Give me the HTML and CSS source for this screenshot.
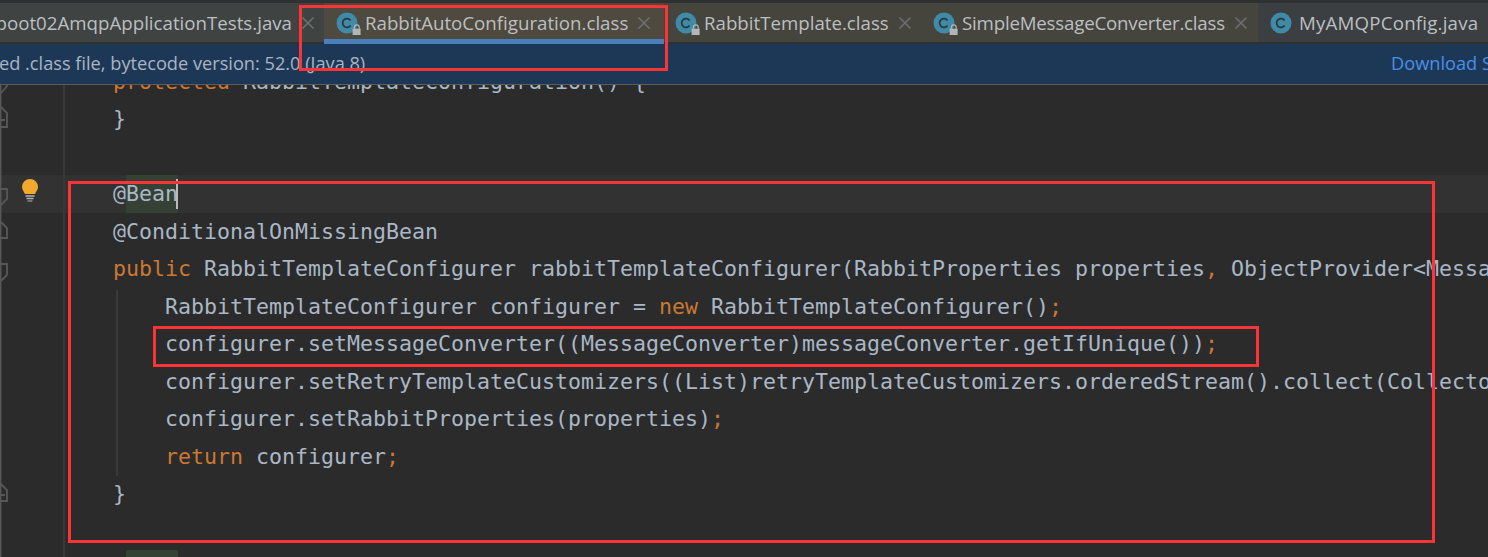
FILE: index.html
```html
<!DOCTYPE html>
<html lang="en">
<head>
<meta charset="utf-8">
<title>RabbitAutoConfiguration.class</title>
<link rel="stylesheet" href="styles.css">
</head>
<body>
<svg class="defs" width="0" height="0" aria-hidden="true">
  <symbol id="cls" viewBox="0 0 26 24">
    <circle cx="11" cy="12" r="10.5" fill="#3f8aa6"/>
    <path d="M14.6 9.400A4.400 4.400 0 1 0 14.600 14.600" fill="none" stroke="#29363c" stroke-width="1.7"/>
  </symbol>
  <symbol id="lock" viewBox="0 0 26 24">
    <path d="M18.400 17.800v-1.600a2.400 2.400 0 0 1 4.800 0v1.600" fill="none" stroke="#b3b6b8" stroke-width="1.200"/>
    <rect x="16.600" y="17.600" width="8" height="6.400" fill="#b3b6b8"/>
  </symbol>
  <symbol id="close" viewBox="0 0 14 14">
    <path d="M1.500 1.500L12.500 12.500M12.500 1.500L1.500 12.500" stroke="#6e7172" stroke-width="1.500" fill="none"/>
  </symbol>
</svg>
<div class="app">
  <div class="tabs">
    <div class="tab tab-first">
      <span class="tab-label">boot02AmqpApplicationTests.java</span>
      <svg class="tab-close"><use href="#close"/></svg>
    </div>
    <div class="tab tab-active">
      <svg class="tab-icon"><use href="#cls"/><use href="#lock"/></svg>
      <span class="tab-label">RabbitAutoConfiguration.class</span>
      <svg class="tab-close"><use href="#close"/></svg>
    </div>
    <div class="tab tab-third">
      <svg class="tab-icon"><use href="#cls"/><use href="#lock"/></svg>
      <span class="tab-label">RabbitTemplate.class</span>
      <svg class="tab-close"><use href="#close"/></svg>
    </div>
    <div class="tab tab-fourth">
      <svg class="tab-icon"><use href="#cls"/><use href="#lock"/></svg>
      <span class="tab-label">SimpleMessageConverter.class</span>
      <svg class="tab-close"><use href="#close"/></svg>
    </div>
    <div class="tab tab-last">
      <svg class="tab-icon"><use href="#cls"/></svg>
      <span class="tab-label">MyAMQPConfig.java</span>
    </div>
  </div>
  <div class="banner">
    <span class="banner-text">ed .class file, bytecode version: 52.0 (Java 8)</span>
    <span class="banner-link">Download Sources</span>
  </div>
  <div class="editor">
    <div class="code">
      <div class="line"><span class="kw">protected</span> RabbitTemplateConfiguration() {</div>
      <div class="line">}</div>
      <div class="line"></div>
      <div class="line line-current">@<span class="match">Bean</span><span class="caret"></span></div>
      <div class="line">@ConditionalOnMissingBean</div>
      <div class="line"><span class="kw">public</span> RabbitTemplateConfigurer rabbitTemplateConfigurer(RabbitProperties properties<span class="kw">,</span> ObjectProvider&lt;MessageConverter&gt; messageConverter<span class="kw">,</span> ObjectProvider&lt;RabbitRetryTemplateCustomizer&gt; retryTemplateCustomizers) {</div>
      <div class="line indent">RabbitTemplateConfigurer configurer = <span class="kw">new</span> RabbitTemplateConfigurer()<span class="kw">;</span></div>
      <div class="line indent">configurer.setMessageConverter((MessageConverter)messageConverter.getIfUnique())<span class="kw">;</span></div>
      <div class="line indent">configurer.setRetryTemplateCustomizers((List)retryTemplateCustomizers.orderedStream().collect(Collectors.toList()))<span class="kw">;</span></div>
      <div class="line indent">configurer.setRabbitProperties(properties)<span class="kw">;</span></div>
      <div class="line indent"><span class="kw">return</span> configurer<span class="kw">;</span></div>
      <div class="line">}</div>
      <div class="line"></div>
      <div class="line">&nbsp;<span class="match">Bean</span></div>
    </div>
    <div class="indent-guide"></div>
    <div class="gutter">
      <svg class="folds" width="10" height="473" viewBox="0 85 10 473">
        <g fill="none" stroke="#585858" stroke-width="1.8">
          <path d="M0.500 85V557"/>
          <path d="M7 85V86L1 93"/>
          <path d="M1 107L7 113V127H0M0 120H5"/>
          <path d="M0 189H7V199L1 205"/>
          <path d="M1 222L7 228V238H0"/>
          <path d="M0 264H7V275L1 281"/>
          <path d="M1 484L7 490V501H0M0 495H5"/>
        </g>
      </svg>
      <svg class="bulb" width="18" height="24" viewBox="0 0 18 24">
        <path d="M9 1a8 8 0 0 1 8 8c0 3.200-2.200 4.700-3 7H4c-.8-2.300-3-3.800-3-7a8 8 0 0 1 8-8z" fill="#f2a92e"/>
        <path d="M4.500 18h9M5.500 20.500h7" stroke="#b4b4b4" stroke-width="1.300"/>
        <path d="M6.500 23h5" stroke="#969696" stroke-width="1.300"/>
      </svg>
    </div>
  </div>
  <div class="mark mark-tab"></div>
  <div class="mark mark-method"></div>
  <div class="mark mark-line"></div>
</div>
</body>
</html>
```
FILE: styles.css
```css
html, body {
  margin: 0;
  padding: 0;
  background: #2b2b2b;
}
.defs {
  position: absolute;
}
.app {
  position: relative;
  width: 1488px;
  height: 557px;
  overflow: hidden;
  display: flex;
  flex-direction: column;
}
.tabs {
  display: flex;
  align-items: flex-start;
  height: 41px;
  padding-top: 3px;
  background: #2f3031;
  flex: none;
}
.tab {
  position: relative;
  display: flex;
  align-items: center;
  box-sizing: border-box;
  height: 39px;
  font: 18.7px "Open Sans", sans-serif;
  color: #bcbfc1;
  white-space: nowrap;
  overflow: hidden;
  flex: none;
}
.tab-first {
  width: 324px;
  background: #3f4342;
  justify-content: flex-end;
  padding-right: 9px;
}
.tab-active {
  width: 340px;
  height: 41px;
  background: #4e4a3f;
  padding-left: 12px;
  padding-bottom: 2px;
  box-shadow: inset 0 -5px 0 #4a7fbc;
}
.tab-third {
  width: 257px;
  background: #45443d;
  padding-left: 11px;
}
.tab-fourth {
  width: 337px;
  background: #45443d;
  padding-left: 12px;
  letter-spacing: -0.2px;
}
.tab-last {
  width: 230px;
  background: #3b3f42;
  padding-left: 12px;
  letter-spacing: 0.2px;
}
.tab-icon {
  width: 26px;
  height: 24px;
  margin-right: 3px;
  flex: none;
}
.tab-close {
  width: 14px;
  height: 14px;
  margin-left: 9px;
  flex: none;
}
.banner {
  display: flex;
  align-items: center;
  justify-content: space-between;
  flex: none;
  box-sizing: border-box;
  height: 41px;
  padding-bottom: 3px;
  background: #1d3857;
  border-bottom: 1px solid #5c5c5c;
  font: 18.2px "Open Sans", sans-serif;
  white-space: nowrap;
  overflow: hidden;
}
.banner-text {
  color: #a9b4c0;
  margin-left: -1px;
}
.banner-link {
  color: #4a8fe7;
  width: 97px;
  overflow: hidden;
}
.editor {
  position: relative;
  flex: 1;
  overflow: hidden;
}
.code {
  margin-top: -22.5px;
  font: 21.6px/37.5px "DejaVu Sans Mono", monospace;
  color: #a9b7c6;
}
.line {
  height: 37.5px;
  padding-left: 113px;
  overflow: hidden;
  white-space: pre;
}
.line-current {
  background: #323232;
}
.indent {
  padding-left: 165px;
}
.kw {
  color: #cc7832;
}
.match {
  display: inline-block;
  height: 37.5px;
  background: #344134;
  vertical-align: top;
}
.caret {
  display: inline-block;
  width: 2px;
  height: 30px;
  margin-left: -2px;
  margin-top: 4px;
  background: #bbbbbb;
  vertical-align: top;
}
.gutter {
  position: absolute;
  top: 0;
  bottom: 0;
  left: 0;
  width: 63px;
  border-right: 2px solid #383838;
}
.folds {
  position: absolute;
  left: 0;
  top: 0;
}
.bulb {
  position: absolute;
  left: 21px;
  top: 93px;
}
.indent-guide {
  position: absolute;
  left: 116px;
  top: 205px;
  width: 2px;
  height: 186px;
  background: #393939;
}
.mark {
  position: absolute;
  box-sizing: border-box;
  border: 3px solid #fb3535;
}
.mark-tab {
  left: 299px;
  top: 5px;
  width: 369px;
  height: 66px;
}
.mark-method {
  left: 68px;
  top: 181px;
  width: 1367px;
  height: 362px;
}
.mark-line {
  left: 153px;
  top: 326px;
  width: 1106px;
  height: 41px;
}
```
